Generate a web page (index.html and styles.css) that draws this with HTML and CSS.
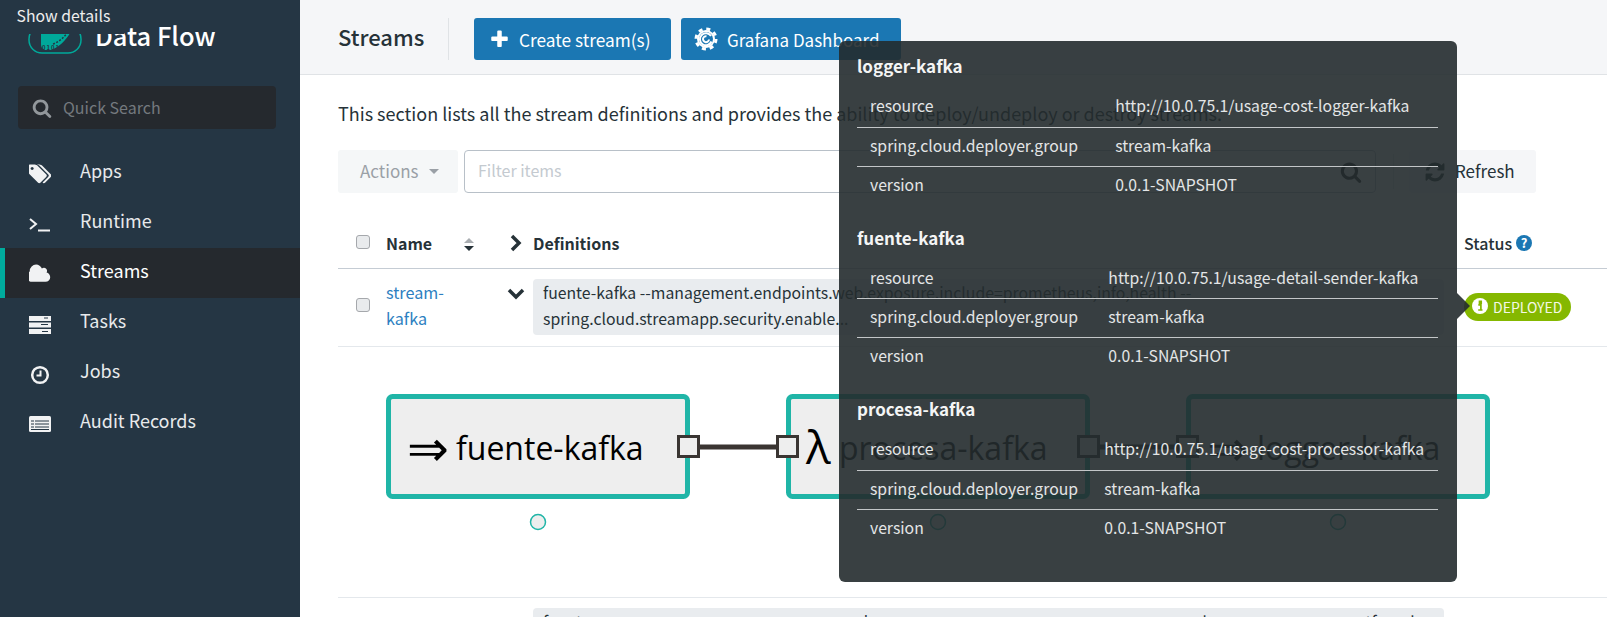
FILE: index.html
```html
<!DOCTYPE html>
<html lang="en">
<head>
<meta charset="utf-8">
<title>Streams</title>
<link rel="stylesheet" href="styles.css">
</head>
<body>
<div class="app">
  <aside class="sidebar">
    <div class="brand">
      <svg class="logo" viewBox="0 0 54 40" width="54" height="40">
        <rect class="logo-ring" x="1" y="12" width="52" height="27" rx="13"/>
        <path class="logo-fill" d="M13 2h32c1 9-2 18-8 24-4 5-10 9-15 10h-5c-3-1-4-3-4-6z"/>
        <path class="logo-cut" d="M25 30c8-3 14-9 18-18"/>
        <text class="logo-bits" x="14" y="36">0101</text>
      </svg>
      <span class="brand-name">Data Flow</span>
    </div>
    <div class="quick-search">
      <svg class="qs-icon" viewBox="0 0 1792 1792"><path d="M1216 832q0-185-131.5-316.5t-316.5-131.5-316.5 131.5-131.5 316.5 131.5 316.5 316.5 131.5 316.5-131.5 131.5-316.5zm512 832q0 52-38 90t-90 38q-54 0-90-38l-343-342q-179 124-399 124-143 0-273.5-55.5t-225-150-150-225-55.5-273.5 55.5-273.5 150-225 225-150 273.5-55.5 273.5 55.5 225 150 150 225 55.5 273.5q0 220-124 399l343 343q37 37 37 90z"/></svg>
      <span class="qs-text">Quick Search</span>
    </div>
    <nav class="nav">
      <a class="nav-item"><svg class="nav-icon" viewBox="0 0 1792 1792"><path d="M384 448q0-53-37.5-90.5t-90.5-37.5-90.5 37.5-37.5 90.5 37.5 90.5 90.5 37.5 90.5-37.5 37.5-90.5zm1067 576q0 53-37 90l-491 492q-39 37-91 37-53 0-90-37l-715-716q-38-37-64.5-101t-26.5-117v-416q0-52 38-90t90-38h416q53 0 117 26.5t102 64.5l715 714q37 39 37 91zm384 0q0 53-37 90l-491 492q-39 37-91 37-36 0-59-14t-53-45l470-470q37-37 37-90 0-52-37-91l-715-714q-38-38-102-64.5t-117-26.5h224q53 0 117 26.5t102 64.5l715 714q37 39 37 91z"/></svg><span>Apps</span></a>
      <a class="nav-item"><svg class="nav-icon" viewBox="0 0 22 22"><path class="term" d="M1 6l6 5-6 5M9 17.500h12"/></svg><span>Runtime</span></a>
      <a class="nav-item active"><svg class="nav-icon" viewBox="0 0 1792 1792"><path d="M1728 1152q0 159-112.5 271.5t-271.5 112.5h-1088q-185 0-316.5-131.5t-131.5-316.5q0-132 71-241.5t187-163.5q-2-28-2-43 0-212 150-362t362-150q158 0 286.5 88t187.5 230q70-62 166-62 106 0 181 75t75 181q0 75-41 138 129 30 213 134.5t84 239.5z"/></svg><span>Streams</span></a>
      <a class="nav-item"><svg class="nav-icon" viewBox="0 0 22 22"><path d="M0 3h22v5H0zM0 9.500h22v5H0zM0 16h22v5H0z"/><path class="cut" d="M15 5h4M12 11.500h7M13 18.500h6"/></svg><span>Tasks</span></a>
      <a class="nav-item"><svg class="nav-icon" viewBox="0 0 22 22"><circle class="clock" cx="11" cy="12" r="7.800"/><path class="clock-h" d="M11.500 7.500v5H7.500"/></svg><span>Jobs</span></a>
      <a class="nav-item"><svg class="nav-icon" viewBox="0 0 22 22"><rect x="0" y="3" width="22" height="16" rx="1.500"/><path class="cut" d="M2 8h3M6 8h14M2 11h3M6 11h14M2 14h3M6 14h14M2 16.500h18"/></svg><span>Audit Records</span></a>
    </nav>
  </aside>

  <main class="main">
    <header class="topbar">
      <h1 class="page-title">Streams</h1>
      <button class="btn-primary create"><svg class="btn-icon" viewBox="0 0 1792 1792"><path d="M1600 736v192q0 40-28 68t-68 28h-416v416q0 40-28 68t-68 28h-192q-40 0-68-28t-28-68v-416h-416q-40 0-68-28t-28-68v-192q0-40 28-68t68-28h416v-416q0-40 28-68t68-28h192q40 0 68 28t28 68v416h416q40 0 68 28t28 68z"/></svg>Create stream(s)</button>
      <button class="btn-primary grafana"><svg class="btn-icon graf" viewBox="0 0 24 24"><circle class="graf-teeth" cx="12" cy="12" r="10"/><circle class="graf-ring" cx="12" cy="12" r="8"/><path class="graf-spiral" d="M17 9a6 6 0 1 0 .500 5.500M15 12.500a3 3 0 1 1-2.500-3.300"/></svg>Grafana Dashboard</button>
    </header>

    <p class="intro">This section lists all the stream definitions and provides the ability to deploy/undeploy or destroy streams.</p>

    <div class="toolbar">
      <div class="actions"><span class="raise">Actions</span><i class="caret"></i></div>
      <div class="filter">
        <span class="filter-ph">Filter items</span>
        <svg class="filter-icon" viewBox="0 0 1792 1792"><path d="M1216 832q0-185-131.5-316.5t-316.5-131.5-316.5 131.5-131.5 316.5 131.5 316.5 316.5 131.5 316.5-131.5 131.5-316.5zm512 832q0 52-38 90t-90 38q-54 0-90-38l-343-342q-179 124-399 124-143 0-273.5-55.5t-225-150-150-225-55.5-273.5 55.5-273.5 150-225 225-150 273.5-55.5 273.5 55.5 225 150 150 225 55.5 273.5q0 220-124 399l343 343q37 37 37 90z"/></svg>
      </div>
      <span class="tool-sep"></span>
      <div class="refresh"><svg class="refresh-icon" viewBox="0 0 1792 1792"><path d="M1639 1056q0 5-1 7-64 268-268 434.5t-478 166.5q-146 0-282.5-55t-243.5-157l-129 129q-19 19-45 19t-45-19-19-45v-448q0-26 19-45t45-19h448q26 0 45 19t19 45-19 45l-137 137q71 66 161 102t187 36q134 0 250-65t186-179q11-17 53-117 8-23 30-23h192q13 0 22.5 9.5t9.5 22.5zm25-800v448q0 26-19 45t-45 19h-448q-26 0-45-19t-19-45 19-45l138-138q-148-137-349-137-134 0-250 65t-186 179q-11 17-53 117-8 23-30 23h-199q-13 0-22.5-9.5t-9.5-22.5v-7q65-268 270-434.5t480-166.5q146 0 284 55.5t245 156.5l130-129q19-19 45-19t45 19 19 45z"/></svg><span class="raise">Refresh</span></div>
    </div>

    <div class="thead">
      <div class="col-check"><span class="checkbox head-check"></span></div>
      <div class="col-name">Name<svg class="sort" viewBox="0 0 10 13"><path class="sort-up" d="M5 0l5 5H0z"/><path d="M0 8h10l-5 5z"/></svg></div>
      <div class="col-chev"><svg class="chev" viewBox="0 0 14 18"><path d="M3 2l7 7-7 7"/></svg></div>
      <div class="col-def">Definitions</div>
      <div class="col-status">Status<svg class="help" viewBox="0 0 16 16"><circle cx="8" cy="8" r="8"/><text x="8" y="12.500">?</text></svg></div>
    </div>

    <div class="trow">
      <div class="col-check"><span class="checkbox row-check"></span></div>
      <div class="col-name"><a class="stream-link">stream-<br>kafka</a></div>
      <div class="col-chev"><svg class="chev down" viewBox="0 0 18 14"><path d="M2 3l7 7 7-7"/></svg></div>
      <div class="col-def"><div class="code">fuente-kafka --management.endpoints.web.exposure.include=prometheus,info,health --<br>spring.cloud.streamapp.security.enable...</div></div>
      <div class="col-status"><span class="badge"><svg class="info" viewBox="0 0 16 16"><circle cx="8" cy="8" r="8"/><path class="info-i" d="M6.300 6.800h2.600v4.700M6.200 12h4.300M7.500 3.300h1.700v1.800H7.500z"/></svg>DEPLOYED</span></div>
    </div>

    <svg class="diagram" viewBox="338 347 1269 250" width="1269" height="250">
      <rect class="node" x="388.500" y="396.500" width="299" height="100" rx="4"/>
      <rect class="node" x="788.500" y="396.500" width="299" height="100" rx="4"/>
      <rect class="node" x="1188.500" y="396.500" width="299" height="100" rx="4"/>
      <text class="node-label" y="460"><tspan class="glyph" x="407" y="466">⇒</tspan><tspan x="456" y="460">fuente-kafka</tspan></text>
      <text class="node-label" y="460"><tspan class="lambda" x="806" y="464">λ</tspan><tspan x="839" y="460">procesa-kafka</tspan></text>
      <text class="node-label" y="460"><tspan class="glyph" x="1207" y="466">⇒</tspan><tspan x="1257" y="460">logger-kafka</tspan></text>
      <path class="link" d="M699 447H776M1099 447H1177"/>
      <rect class="port" x="678.500" y="436.500" width="20" height="20"/>
      <rect class="port" x="777.500" y="436.500" width="20" height="20"/>
      <rect class="port" x="1078.500" y="436.500" width="20" height="20"/>
      <rect class="port" x="1177.500" y="436.500" width="20" height="20"/>
      <circle class="dot" cx="538" cy="522" r="7.500"/>
      <circle class="dot" cx="938" cy="522" r="7.500"/>
      <circle class="dot" cx="1338" cy="522" r="7.500"/>
    </svg>

    <div class="trow next">
      <div class="col-check"></div>
      <div class="col-name"></div>
      <div class="col-chev"></div>
      <div class="col-def"><div class="code">fuente-mmmm --mmmmmmmmm.mmmmkmmmm.mmmm.mmmmmm.mmmmmmm.dmmm=mmmmmmm,tfmm,hmm --</div></div>
    </div>
  </main>
</div>

<div class="hint">Show details</div>

<div class="details">
  <section class="details-app">
    <h4>logger-kafka</h4>
    <table>
      <tr><td>resource</td><td>http://10.0.75.1/usage-cost-logger-kafka</td></tr>
      <tr><td>spring.cloud.deployer.group</td><td>stream-kafka</td></tr>
      <tr><td>version</td><td>0.0.1-SNAPSHOT</td></tr>
    </table>
  </section>
  <section class="details-app">
    <h4>fuente-kafka</h4>
    <table>
      <tr><td>resource</td><td>http://10.0.75.1/usage-detail-sender-kafka</td></tr>
      <tr><td>spring.cloud.deployer.group</td><td>stream-kafka</td></tr>
      <tr><td>version</td><td>0.0.1-SNAPSHOT</td></tr>
    </table>
  </section>
  <section class="details-app">
    <h4>procesa-kafka</h4>
    <table>
      <tr><td>resource</td><td>http://10.0.75.1/usage-cost-processor-kafka</td></tr>
      <tr><td>spring.cloud.deployer.group</td><td>stream-kafka</td></tr>
      <tr><td>version</td><td>0.0.1-SNAPSHOT</td></tr>
    </table>
  </section>
  <i class="details-arrow"></i>
</div>
</body>
</html>
```
FILE: styles.css
```css
* { box-sizing: border-box; }
html, body { margin: 0; height: 100%; overflow: hidden; background: #fff; }
body { font-family: "Noto Sans CJK SC", "Noto Sans", sans-serif; color: #263238; font-size: 18px; }
.app { display: flex; height: 617px; overflow: hidden; }

/* sidebar */
.sidebar { width: 300px; flex: none; background: #253644; color: #e8eaec; }
.brand { height: 86px; padding: 14px 0 0 28px; display: flex; align-items: flex-start; }
.logo { flex: none; display: block; }
.logo-ring { fill: none; stroke: #00a99a; stroke-width: 1.500; }
.logo-fill { fill: #00a99a; }
.logo-cut { fill: none; stroke: #253644; stroke-width: 1.500; stroke-dasharray: 2 1.500; }
.logo-bits { fill: #253644; font-size: 6px; font-weight: 700; letter-spacing: 1px; }
.brand-name { margin-left: 13px; font-size: 25.500px; line-height: 42px; font-weight: 500; color: #fff; white-space: nowrap; }
.quick-search { margin: 0 24px 0 18px; height: 43px; background: #25292e; border-radius: 4px; display: flex; align-items: center; padding-left: 14px; color: #74797e; font-size: 16px; }
.qs-icon { width: 20px; height: 20px; fill: #92979b; margin-right: 11px; flex: none; }
.qs-text { padding-bottom: 2px; }
.nav { margin-top: 19px; }
.nav-item { height: 50px; display: flex; align-items: center; padding-left: 29px; border-left: 0 solid #00ab9d; font-size: 18px; color: #e8eaec; padding-bottom: 3px; }
.nav-item span { margin-left: 29px; padding-bottom: 4px; }
.nav-item.active { background: #25292e; color: #fff; border-left-width: 5px; padding-left: 24px; }
.nav-icon { width: 22px; height: 22px; fill: #f1f2f3; flex: none; margin-top: 5px; }
.term { fill: none; stroke: #f1f2f3; stroke-width: 2; }
.cut { fill: none; stroke: #253644; stroke-width: 1; }
.clock { fill: none; stroke: #f1f2f3; stroke-width: 2.500; }
.clock-h { fill: none; stroke: #f1f2f3; stroke-width: 2; }

/* top bar */
.main { flex: 1; min-width: 0; }
.topbar { height: 75px; background: #f5f6f8; border-bottom: 1px solid #e0e3e6; padding: 18px 0 0 38px; display: flex; align-items: flex-start; }
.page-title { margin: 0; width: 111px; height: 42px; border-right: 1px solid #e0e3e6; font-size: 22px; font-weight: 500; line-height: 37px; color: #263238; }
.btn-primary { height: 42px; border: 0; border-radius: 3px; background: #1b77b3; color: #fff; font: inherit; font-size: 17px; display: flex; align-items: center; padding: 0; }
.create { width: 197px; margin-left: 25px; padding-left: 15px; font-size: 17.300px; }
.grafana { width: 220px; margin-left: 10px; padding-left: 13px; }
.btn-icon { width: 21px; height: 21px; fill: #fff; margin-right: 9px; flex: none; }
.graf { width: 24px; height: 24px; margin-right: 9px; fill: none; }
.graf-teeth { fill: none; stroke: #fff; stroke-width: 3; stroke-dasharray: 4 3.850; }
.graf-ring { fill: none; stroke: #fff; stroke-width: 2; }
.graf-spiral { fill: none; stroke: #fff; stroke-width: 2; }

.intro { margin: 26px 0 0 38px; font-size: 18px; line-height: 24px; color: #263238; white-space: nowrap; }

/* toolbar */
.toolbar { display: flex; margin: 25px 71px 0 38px; height: 43px; }
.raise { padding-bottom: 2px; }
.actions { width: 120px; background: #f5f7f8; border-radius: 3px; color: #9aa0a6; font-size: 17px; display: flex; align-items: center; padding-left: 22px; flex: none; }
.caret { width: 0; height: 0; border: 5px solid transparent; border-top-color: #9aa0a6; border-bottom: 0; margin-left: 10px; }
.filter { flex: 1; margin-left: 6px; border: 1px solid #b8c0c8; border-radius: 4px; display: flex; align-items: center; justify-content: space-between; padding: 0 13px 0 13px; color: #c4cad0; font-size: 16px; }
.filter-ph { padding-bottom: 4px; }
.filter-icon { width: 22px; height: 22px; fill: #222; }
.tool-sep { width: 1px; background: #e0e3e6; margin: 4px 15px 4px 17px; flex: none; }
.refresh { width: 127px; flex: none; background: #f5f6f8; border-radius: 3px; display: flex; align-items: center; padding-left: 15px; font-size: 17px; color: #263238; }
.refresh-icon { width: 22px; height: 22px; fill: #263238; margin-right: 9px; flex: none; }

/* table */
.thead, .trow { margin-left: 38px; display: flex; border-bottom: 1px solid #e4e8ec; }
.thead { margin-top: 26px; height: 50px; padding-bottom: 2px; border-bottom-color: #c5ccd4; font-weight: 700; font-size: 16px; align-items: center; }
.trow { height: 78px; padding-top: 10px; }
.col-check { width: 48px; flex: none; padding-left: 18px; }
.col-name { width: 119px; flex: none; display: flex; align-items: center; position: relative; }
.col-chev { width: 28px; flex: none; }
.col-def { width: 911px; flex: none; }
.col-status { margin-left: 20px; flex: none; display: flex; align-items: center; }
.thead .col-status { font-weight: 500; }
.checkbox { display: block; width: 14px; height: 14px; background: #e9ebed; border: 1px solid #a5a8ac; border-radius: 3px; }
.head-check { margin-top: -2px; }
.row-check { margin-top: 19px; }
.sort { position: absolute; left: 78px; top: 50%; margin-top: -5px; width: 10px; height: 13px; fill: #263238; }
.sort-up { fill: #a9adb1; }
.chev { display: block; width: 14px; height: 18px; fill: none; stroke: #263238; stroke-width: 3.500; margin-left: 4px; }
.chev.down { width: 18px; height: 14px; margin: 8px 0 0 2px; }
.help { width: 16px; height: 16px; margin-left: 4px; fill: #1b77b3; }
.help text { fill: #fff; font-size: 13px; font-weight: 700; text-anchor: middle; }
.stream-link { color: #2d7fc1; font-size: 16.200px; line-height: 26px; align-self: flex-start; }
.code { height: 56px; background: #e9ecef; border-radius: 4px; padding: 1px 10px; font-size: 15.800px; line-height: 26px; color: #263238; white-space: nowrap; overflow: hidden; }
.badge { height: 28px; width: 107px; margin-top: 14px; background: #85b800; border-radius: 14px; color: #f4f8e6; font-size: 14px; display: flex; align-items: center; padding-left: 8px; align-self: flex-start; }
.info { width: 16px; height: 16px; fill: #fff; margin: -2px 5px 0 0; flex: none; }
.info-i { fill: none; stroke: #85b800; stroke-width: 1.700; }

/* diagram */
.diagram { display: block; margin-left: 38px; font-family: "Open Sans", sans-serif; }
.node { fill: #eee; stroke: #20b5a7; stroke-width: 5; }
.node-label { font-size: 32px; fill: #000; }
.glyph { font-family: "Liberation Sans", sans-serif; font-size: 50px; }
.lambda { font-size: 46px; }
.link { stroke: #3a3532; stroke-width: 5; fill: none; }
.port { fill: #eee; stroke: #3a3532; stroke-width: 3; }
.dot { fill: #eee; stroke: #20b5a7; stroke-width: 1.500; }
.trow.next { height: 40px; border-top: 1px solid #e4e8ec; border-bottom: 0; }

/* overlays */
.hint { position: absolute; left: 0; top: 0; width: 124px; height: 34px; background: #253644; color: #eee; font-size: 15.800px; line-height: 32px; padding-left: 16.500px; }
.details { position: absolute; left: 839px; top: 41px; width: 618px; height: 541px; padding: 13px 19px 0 18px; background: rgba(36, 43, 46, 0.9); border-radius: 6px; color: #e4e6e7; font-size: 15.750px; }
.details-app { margin-bottom: 20.500px; }
.details-app h4 { margin: 0 0 10px; font-size: 17px; line-height: 24px; font-weight: 700; color: #f4f5f5; }
.details-app table { width: 100%; border-collapse: collapse; }
.details-app td { height: 39px; padding: 0 12px 2px 13px; border-bottom: 1px solid #c3c6c8; white-space: nowrap; line-height: 20px; }
.details-app tr:last-child td { border-bottom: 0; }
.details-arrow { position: absolute; left: 100%; top: 252px; width: 0; height: 0; border: solid transparent; border-width: 13px 0 13px 13px; border-left-color: rgba(36, 43, 46, 0.9); }
```
